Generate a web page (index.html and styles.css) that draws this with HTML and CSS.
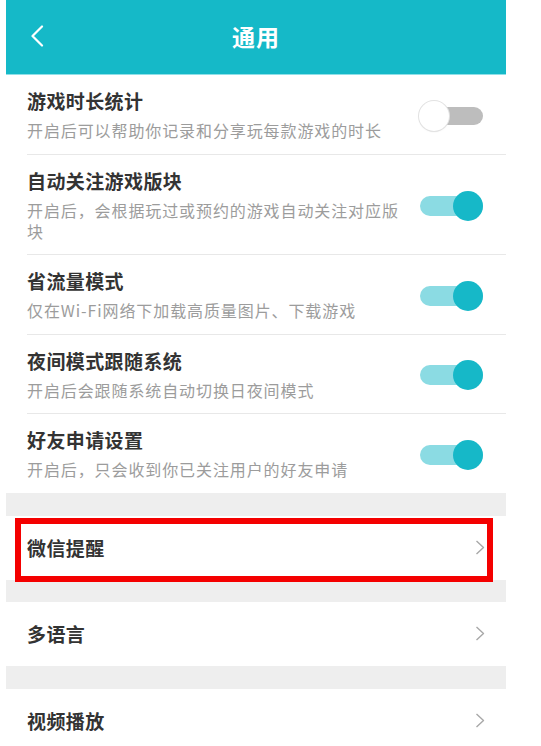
FILE: index.html
```html
<!DOCTYPE html>
<html lang="zh-CN">
<head>
<meta charset="utf-8">
<title>通用</title>
<link rel="stylesheet" href="styles.css">
</head>
<body>
<div class="screen">
  <header class="topbar">
    <span class="back">
      <svg width="14" height="22" viewBox="0 0 14 22"><path d="M12 1.5 L2.5 11 L12 20.5" fill="none" stroke="#fff" stroke-width="2.2" stroke-linecap="round" stroke-linejoin="round"/></svg>
    </span>
    <h1 class="title">通用</h1>
  </header>

  <section class="group">
    <div class="row">
      <div class="text">
        <div class="name">游戏时长统计</div>
        <div class="desc">开启后可以帮助你记录和分享玩每款游戏的时长</div>
      </div>
      <span class="switch off"><span class="track"></span><span class="knob"></span></span>
    </div>
    <div class="row">
      <div class="text">
        <div class="name">自动关注游戏版块</div>
        <div class="desc">开启后，会根据玩过或预约的游戏自动关注对应版块</div>
      </div>
      <span class="switch on"><span class="track"></span><span class="knob"></span></span>
    </div>
    <div class="row">
      <div class="text">
        <div class="name">省流量模式</div>
        <div class="desc">仅在Wi-Fi网络下加载高质量图片、下载游戏</div>
      </div>
      <span class="switch on"><span class="track"></span><span class="knob"></span></span>
    </div>
    <div class="row">
      <div class="text">
        <div class="name">夜间模式跟随系统</div>
        <div class="desc">开启后会跟随系统自动切换日夜间模式</div>
      </div>
      <span class="switch on"><span class="track"></span><span class="knob"></span></span>
    </div>
    <div class="row last">
      <div class="text">
        <div class="name">好友申请设置</div>
        <div class="desc">开启后，只会收到你已关注用户的好友申请</div>
      </div>
      <span class="switch on"><span class="track"></span><span class="knob"></span></span>
    </div>
  </section>

  <div class="gap"></div>
  <div class="link highlighted">
    <span class="name">微信提醒</span>
    <svg class="chev" width="10" height="15" viewBox="0 0 10 15"><path d="M1.5 1 L8.5 7.5 L1.5 14" fill="none" stroke="#a8a8a8" stroke-width="1.4" stroke-linejoin="round"/></svg>
    <span class="mark"></span>
  </div>
  <div class="gap short"></div>
  <div class="link">
    <span class="name">多语言</span>
    <svg class="chev" width="10" height="15" viewBox="0 0 10 15"><path d="M1.5 1 L8.5 7.5 L1.5 14" fill="none" stroke="#a8a8a8" stroke-width="1.4" stroke-linejoin="round"/></svg>
  </div>
  <div class="gap"></div>
  <div class="link">
    <span class="name">视频播放</span>
    <svg class="chev" width="10" height="15" viewBox="0 0 10 15"><path d="M1.5 1 L8.5 7.5 L1.5 14" fill="none" stroke="#a8a8a8" stroke-width="1.4" stroke-linejoin="round"/></svg>
  </div>
</div>
</body>
</html>
```

FILE: styles.css
```css
* { box-sizing: border-box; }
html, body { margin: 0; padding: 0; background: #fff; }
body {
  font-family: "Noto Sans CJK SC", "Noto Sans", sans-serif;
  overflow: hidden;
}
.screen {
  width: 500px;
  margin-left: 6px;
  background: #fff;
}
.topbar {
  height: 75px;
  background: #15b9c8;
  border-bottom: 1px solid #8fe0e8;
  display: flex;
  align-items: center;
  justify-content: center;
  position: relative;
}
.back {
  position: absolute;
  left: 24px;
  top: 25px;
  width: 14px;
  height: 22px;
  display: flex;
}
.title {
  margin: 0;
  margin-top: -3px;
  color: #fff;
  font-size: 23px;
  font-weight: 700;
  letter-spacing: 1px;
  line-height: 30px;
}
.row {
  margin-left: 21px;
  padding: 15px 23px 12.5px 0;
  border-bottom: 1px solid #e8e8e8;
  display: flex;
  align-items: center;
  gap: 20px;
}
.row.last { border-bottom: none; }
.text { flex: 1; min-width: 0; }
.name {
  font-size: 19px;
  font-weight: 700;
  color: #333;
  line-height: 22px;
  letter-spacing: 0.4px;
}
.desc {
  margin-top: 8px;
  font-size: 16px;
  color: #9c9c9c;
  line-height: 21px;
  letter-spacing: 0.9px;
}
.switch {
  position: relative;
  width: 63px;
  height: 30px;
  flex: none;
}
.switch .track {
  position: absolute;
  left: 0;
  right: 0;
  top: 5px;
  height: 20px;
  border-radius: 10px;
}
.switch .knob {
  position: absolute;
  top: 0;
  width: 30px;
  height: 30px;
  border-radius: 50%;
}
.switch.on .track { background: #8bdbe3; }
.switch.on .knob { right: 0; background: #16b8c8; }
.switch.off .track { left: 18px; top: 6px; height: 18px; background: #bdbdbd; }
.switch.off .knob {
  left: -1px;
  background: #fff;
  box-shadow: 0 0 0 1px #e2e2e2, 0 1px 2px rgba(0,0,0,0.08);
}
.gap {
  height: 23px;
  background: #eeeeee;
}
.gap.short { height: 22px; }
.link {
  position: relative;
  height: 64px;
  padding: 0 21px 0 21px;
  display: flex;
  align-items: center;
  justify-content: space-between;
}
.link .name { line-height: 22px; }
.chev { flex: none; }
.mark {
  position: absolute;
  left: 9px;
  right: 13px;
  top: 2px;
  bottom: -2px;
  border: 6px solid #f40000;
  pointer-events: none;
}
```
